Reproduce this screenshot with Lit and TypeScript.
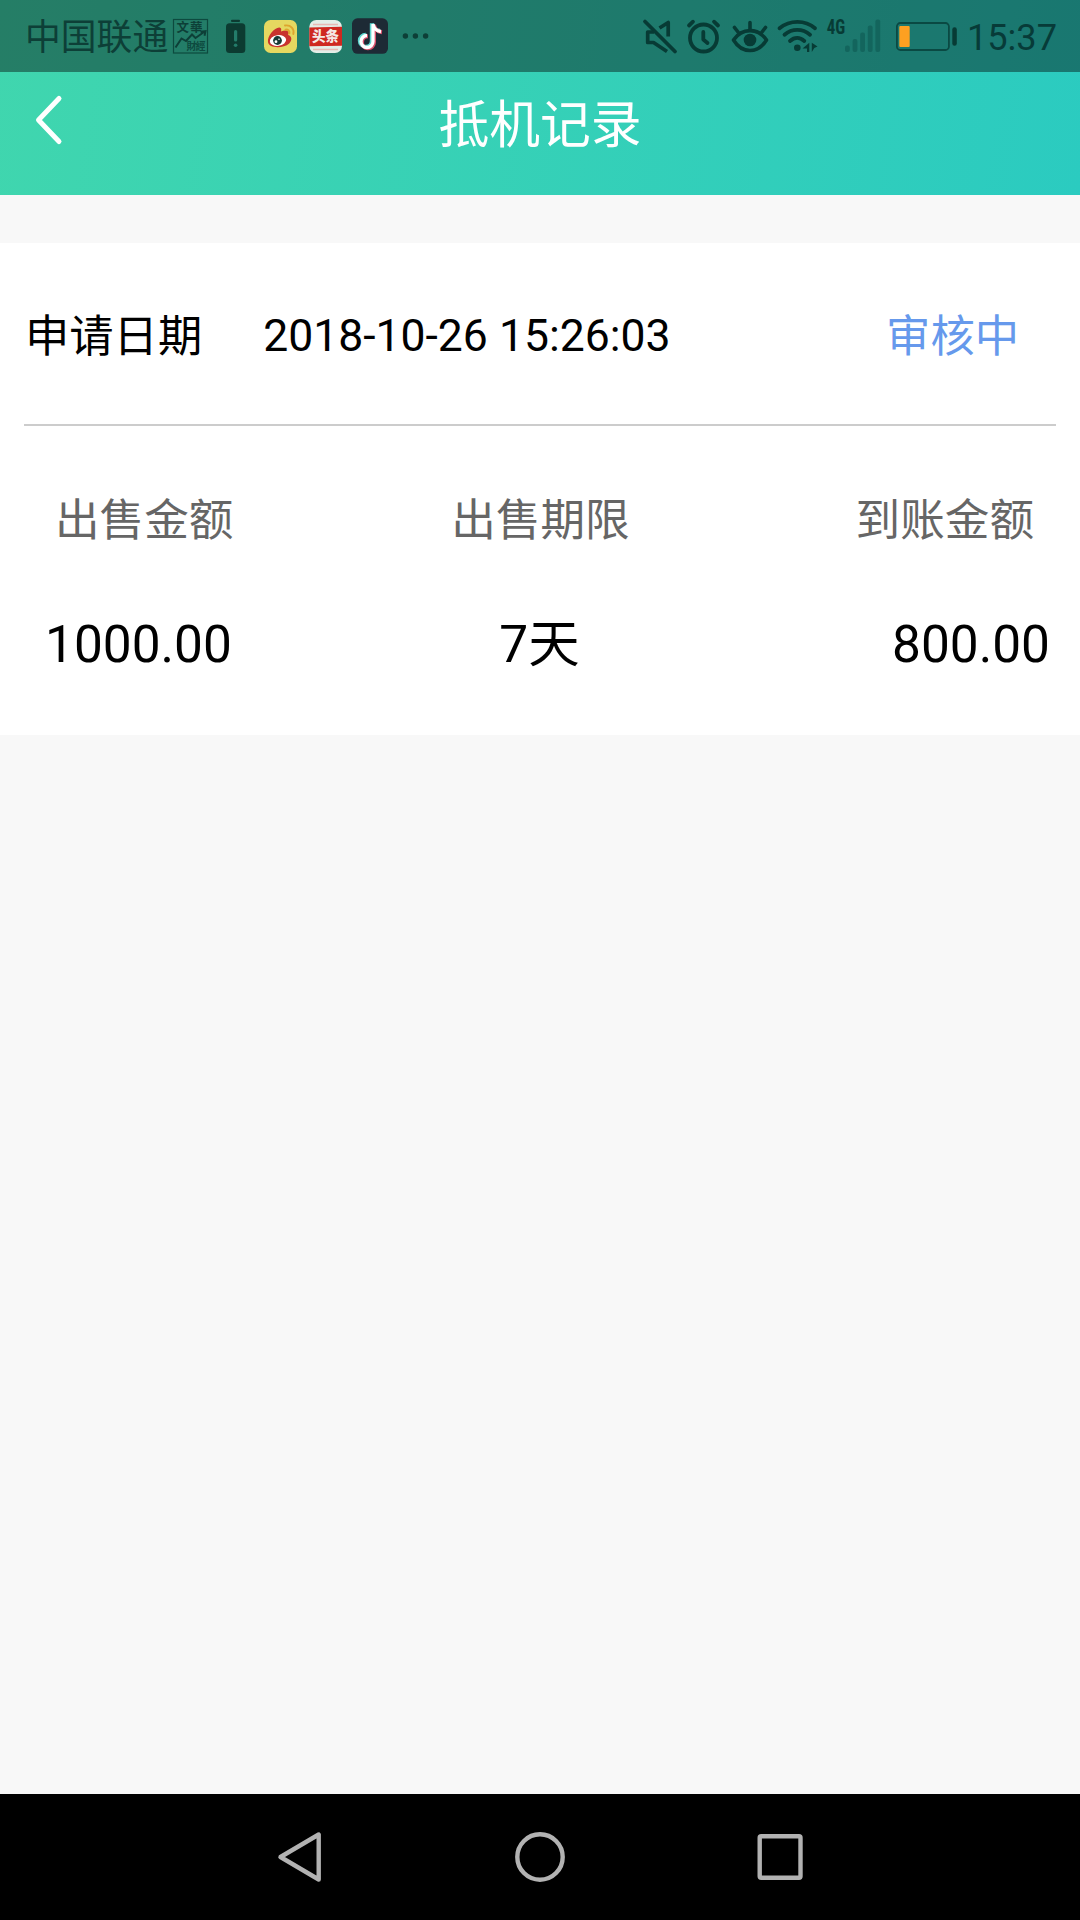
import { LitElement, html, css, svg } from "lit";
import { customElement, property } from "lit/decorators.js";

const dark = "#073b35";

@customElement("status-bar")
class StatusBar extends LitElement {
  static styles = css`
    :host {
      display: flex;
      height: 72px;
      background: rgba(0, 0, 0, 0.41);
      color: #0d3f37;
      font-family: Roboto, "Noto Sans CJK SC", sans-serif;
      white-space: nowrap;
    }
    svg {
      display: block;
      flex: none;
    }
    .group {
      display: flex;
    }
    .carrier {
      padding-left: 25px;
      width: 145px;
      font-size: 35.8px;
      line-height: 77px;
    }
    .spacer {
      flex: 1;
    }
    .time {
      padding-right: 23px;
      font-size: 36.2px;
      line-height: 76px;
      color: #073b38;
    }
    .tiny {
      font-family: "Noto Sans CJK TC", sans-serif;
      font-weight: 700;
    }
    .toutiao {
      font-family: "Noto Sans CJK SC", sans-serif;
      font-weight: 900;
    }
    .net {
      font-family: "Roboto Condensed", Roboto, sans-serif;
      font-weight: 700;
    }
  `;

  private stockIcon() {
    return html`<svg width="46" height="72" viewBox="170 0 46 72">
      <rect x="173.5" y="19.5" width="34" height="33.5" fill="none" stroke="#0d4a3f" stroke-width="1.2" />
      <text class="tiny" x="176.5" y="32" font-size="12.5" textLength="26" fill="#0d3f37">文華</text>
      <text class="tiny" x="186.500" y="50.3" font-size="10" textLength="19" fill="#0d4a3f">財經</text>
      <path d="M175.500 47.500l6-9 4.500 2.500 6-6.500 3.500 3.500 8.500-6M200.500 31.700l5-.5-1 4.600" fill="none" stroke="#0d3f37" stroke-width="2" />
    </svg>`;
  }

  private batteryAlert() {
    return html`<svg width="42" height="72" viewBox="216 0 42 72">
      <rect x="231" y="19.700" width="9" height="2.400" rx="1" fill="#0c3b31" />
      <rect x="226" y="23.300" width="19.300" height="29.700" rx="3.500" fill="#0c3b31" />
      <path d="M235.600 31.500v8.500" stroke="#237c6a" stroke-width="3.200" stroke-linecap="round" />
      <circle cx="235.600" cy="45.300" r="1.800" fill="#237c6a" />
    </svg>`;
  }

  private weibo() {
    return html`<svg width="46" height="72" viewBox="258 0 46 72">
      <rect x="264" y="20" width="33" height="33" rx="6.500" fill="#e5d860" />
      <path d="M268 42c-1-6 7-15 11.500-14.500 1.800.3 2 2 1.500 4 3-1.200 7-1.600 7.500.8.300 1.200-.5 2.200-.3 2.800 4 1.300 4 5.600 1 8.300-6 5.500-20.500 5-21.200-1.400z" fill="#c8322d" />
      <ellipse cx="278" cy="40.500" rx="8.200" ry="5.400" fill="#fff" transform="rotate(-8 278 40.500)" />
      <circle cx="277.500" cy="40.500" r="4.400" fill="#163a35" />
      <circle cx="276" cy="41.700" r="1.400" fill="#fff" />
      <circle cx="279" cy="39.300" r=".8" fill="#fff" />
      <path d="M285 25.500c6-.8 9.500 3.500 8.300 8.500M285.500 29.600c2.700-.3 4.400 1.500 3.900 3.800" fill="none" stroke="#dea52e" stroke-width="1.900" stroke-linecap="round" />
    </svg>`;
  }

  private toutiao() {
    return html`<svg width="44" height="72" viewBox="304 0 44 72">
      <rect x="309.300" y="20" width="32.700" height="33" rx="7" fill="#e3eee8" />
      <path d="M313 24.500h25M313 49.500h25" stroke="#e8b9b3" stroke-width="1.600" />
      <path d="M309.300 27.500l32.700-.7v18.900l-32.700.5z" fill="#cf2820" />
      <text class="toutiao" x="312" y="41.300" font-size="13.500" textLength="27" fill="#f4e9e4">头条</text>
    </svg>`;
  }

  private noteIcon() {
    const note = "M373 24v17.500a6 6 0 1 1-6-6M373 24c.6 4 3.500 7 8 7.500";
    return html`<svg width="48" height="72" viewBox="348 0 48 72">
      <rect x="352" y="18.300" width="36" height="35.500" rx="5.500" fill="#1d2a35" />
      <g fill="none" stroke-width="4">
        <path d=${note} stroke="#5fd6d0" transform="translate(-1.200 -.8)" />
        <path d=${note} stroke="#d9516c" transform="translate(1 .8)" />
        <path d=${note} stroke="#fff" stroke-width="3.300" />
      </g>
    </svg>`;
  }

  private dots() {
    return html`<svg width="40" height="72" viewBox="396 0 40 72">
      ${[405.4, 415.4, 425.6].map((x) => svg`<circle cx=${x} cy="36" r="2.700" fill="#0d3f37" />`)}
    </svg>`;
  }

  private muteIcon() {
    return html`<svg width="46" height="72" viewBox="638 0 46 72" fill="none" stroke=${dark}>
      <path d="M645 21.500l30 30" stroke-width="3.800" stroke-linecap="round" />
      <path d="M654 32h-6.300v10.500h5.800l13.500 9M659.500 28l8.700-5.500v14" stroke-width="3.700" stroke-linejoin="round" />
    </svg>`;
  }

  private alarmIcon() {
    return html`<svg width="44" height="72" viewBox="684 0 44 72" fill="none" stroke=${dark} stroke-width="3.800" stroke-linecap="round" stroke-linejoin="round">
      <circle cx="703.500" cy="38" r="13.500" />
      <path d="M703.300 32v7.500l4.200 3.500M689 25.500l4-3.800M718 25.500l-4-3.800" />
    </svg>`;
  }

  private eyeIcon() {
    return html`<svg width="46" height="72" viewBox="728 0 46 72" fill="none" stroke=${dark} stroke-width="3.600" stroke-linecap="round" stroke-linejoin="round">
      <path d="M733.500 40c8.500-12.500 24.500-12.500 33 0-8.500 14-24.500 14-33 0z" />
      <circle cx="750" cy="40" r="6.300" fill=${dark} stroke="none" />
      <path d="M750 29v-6.500M738 32l-3.500-4.500M762 32l3.500-4.500" />
    </svg>`;
  }

  private wifiIcon() {
    return html`<svg width="46" height="72" viewBox="774 0 46 72" fill="none" stroke=${dark} stroke-width="3.800" stroke-linecap="round">
      <path d="M779.500 28.200c10.500-8.500 25.500-8.500 35.500 0M784.500 34.800c7.500-6.500 18-6.500 25.500 0M790 41c4.500-4 10-4 14.300 0" />
      <circle cx="797.300" cy="47.800" r="3.300" fill=${dark} stroke="none" />
      <path d="M809.300 42.800v9.200h-2.300v-3.500h-4.500zM811.800 52v-9.200l5.700 3.700-3.200 1.500z" fill=${dark} stroke="none" />
    </svg>`;
  }

  private signalIcon() {
    const bars = [6.5, 13, 19.5, 26.5, 32.5];
    return html`<svg width="70" height="72" viewBox="820 0 70 72">
      <text class="net" x="826.800" y="33.700" font-size="20.500" textLength="18.500" lengthAdjust="spacingAndGlyphs" fill=${dark}>4G</text>
      ${bars.map((h, i) => svg`<rect x=${845 + i * 7.6} y=${52 - h} width="4.800" height=${h} rx="2" fill="#13655d" />`)}
    </svg>`;
  }

  private batteryIcon() {
    return html`<svg width="77" height="72" viewBox="890 0 77 72">
      <rect x="896.900" y="23" width="52" height="27" rx="3.500" fill="none" stroke="#0a4943" stroke-width="1.800" />
      <rect x="899.300" y="26" width="10.400" height="21" rx="1" fill="#fda021" />
      <rect x="952.300" y="27.300" width="4.500" height="18.500" rx="2.200" fill=${dark} />
    </svg>`;
  }

  render() {
    return html`
      <div class="carrier">中国联通</div>
      <div class="group">
        ${this.stockIcon()}${this.batteryAlert()}${this.weibo()}${this.toutiao()}${this.noteIcon()}${this.dots()}
      </div>
      <div class="spacer"></div>
      <div class="group">
        ${this.muteIcon()}${this.alarmIcon()}${this.eyeIcon()}${this.wifiIcon()}${this.signalIcon()}${this.batteryIcon()}
      </div>
      <div class="time">15:37</div>
    `;
  }
}

@customElement("record-card")
class RecordCard extends LitElement {
  static styles = css`
    :host {
      display: block;
      height: 492px;
      background: #fff;
      color: #000;
      font-size: 44.6px;
      white-space: nowrap;
    }
    .head {
      display: flex;
      align-items: center;
      box-sizing: border-box;
      height: 181px;
      padding: 4px 61px 0 25px;
      line-height: 60px;
    }
    .name,
    .state {
      padding-top: 3px;
      font-size: 44.3px;
    }
    .date {
      margin-left: 61px;
      flex: 1;
      font-size: 44.5px;
    }
    .state {
      color: #6699ec;
    }
    .rule {
      height: 2px;
      margin: 0 24px;
      background: #ccc;
    }
    .row {
      display: grid;
      grid-template-columns: 1fr auto 1fr;
    }
    .row > :last-child {
      text-align: right;
    }
    .labels {
      padding: 0 46px 0 55px;
      line-height: 190px;
      color: #666;
    }
    .labels > :nth-child(2) {
      padding-right: 8px;
    }
    .values {
      padding: 0 30px 0 45px;
      font-size: 51.4px;
      line-height: 58px;
    }
    .values > :nth-child(2) {
      padding-right: 16px;
    }
  `;

  @property() date = "";
  @property() state = "";
  @property({ attribute: false }) fields: { label: string; value: string }[] = [];

  render() {
    return html`
      <div class="head">
        <span class="name">申请日期</span>
        <span class="date">${this.date}</span>
        <span class="state">${this.state}</span>
      </div>
      <div class="rule"></div>
      <div class="row labels">${this.fields.map((f) => html`<span>${f.label}</span>`)}</div>
      <div class="row values">${this.fields.map((f) => html`<span>${f.value}</span>`)}</div>
    `;
  }
}

@customElement("app-root")
class AppRoot extends LitElement {
  static styles = css`
    :host {
      display: flex;
      flex-direction: column;
      height: 1920px;
      width: 1080px;
      background: #f8f8f8;
      overflow: hidden;
      font-family: Roboto, "Noto Sans CJK SC", sans-serif;
    }
    .top {
      height: 195px;
      background: linear-gradient(100deg, #40d6ae, #2bcbc0);
    }
    .title-bar {
      display: grid;
      grid-template-columns: 100px 1fr 100px;
    }
    .back {
      display: block;
      margin: 20px 0 0 29px;
    }
    .title {
      text-align: center;
      color: #fff;
      font-size: 50.8px;
      line-height: 107px;
    }
    .list {
      flex: 1;
      padding-top: 48px;
    }
    .nav {
      display: flex;
      justify-content: center;
      align-items: center;
      gap: 180px;
      height: 126px;
      background: #000;
    }
  `;

  private fields = [
    { label: "出售金额", value: "1000.00" },
    { label: "出售期限", value: "7天" },
    { label: "到账金额", value: "800.00" },
  ];

  render() {
    return html`
      <div class="top">
        <status-bar></status-bar>
        <div class="title-bar">
          <svg class="back" width="40" height="56" viewBox="0 0 40 56" fill="none" stroke="#fff" stroke-width="5" stroke-linecap="round" stroke-linejoin="round">
            <path d="M30 6.500L9.500 28l20.500 21.500" />
          </svg>
          <div class="title">抵机记录</div>
        </div>
      </div>
      <div class="list">
        <record-card date="2018-10-26 15:26:03" state="审核中" .fields=${this.fields}></record-card>
      </div>
      <div class="nav">
        ${[
          svg`<path d="M48.700 7.500v45L10.500 30z" />`,
          svg`<circle cx="30" cy="30" r="22.700" />`,
          svg`<rect x="9.700" y="9.300" width="40.800" height="41.400" rx="1.500" />`,
        ].map(
          (shape) => html`<svg width="60" height="60" viewBox="0 0 60 60" fill="none" stroke="#b2b2b2" stroke-width="4.400" stroke-linejoin="round">${shape}</svg>`
        )}
      </div>
    `;
  }
}
